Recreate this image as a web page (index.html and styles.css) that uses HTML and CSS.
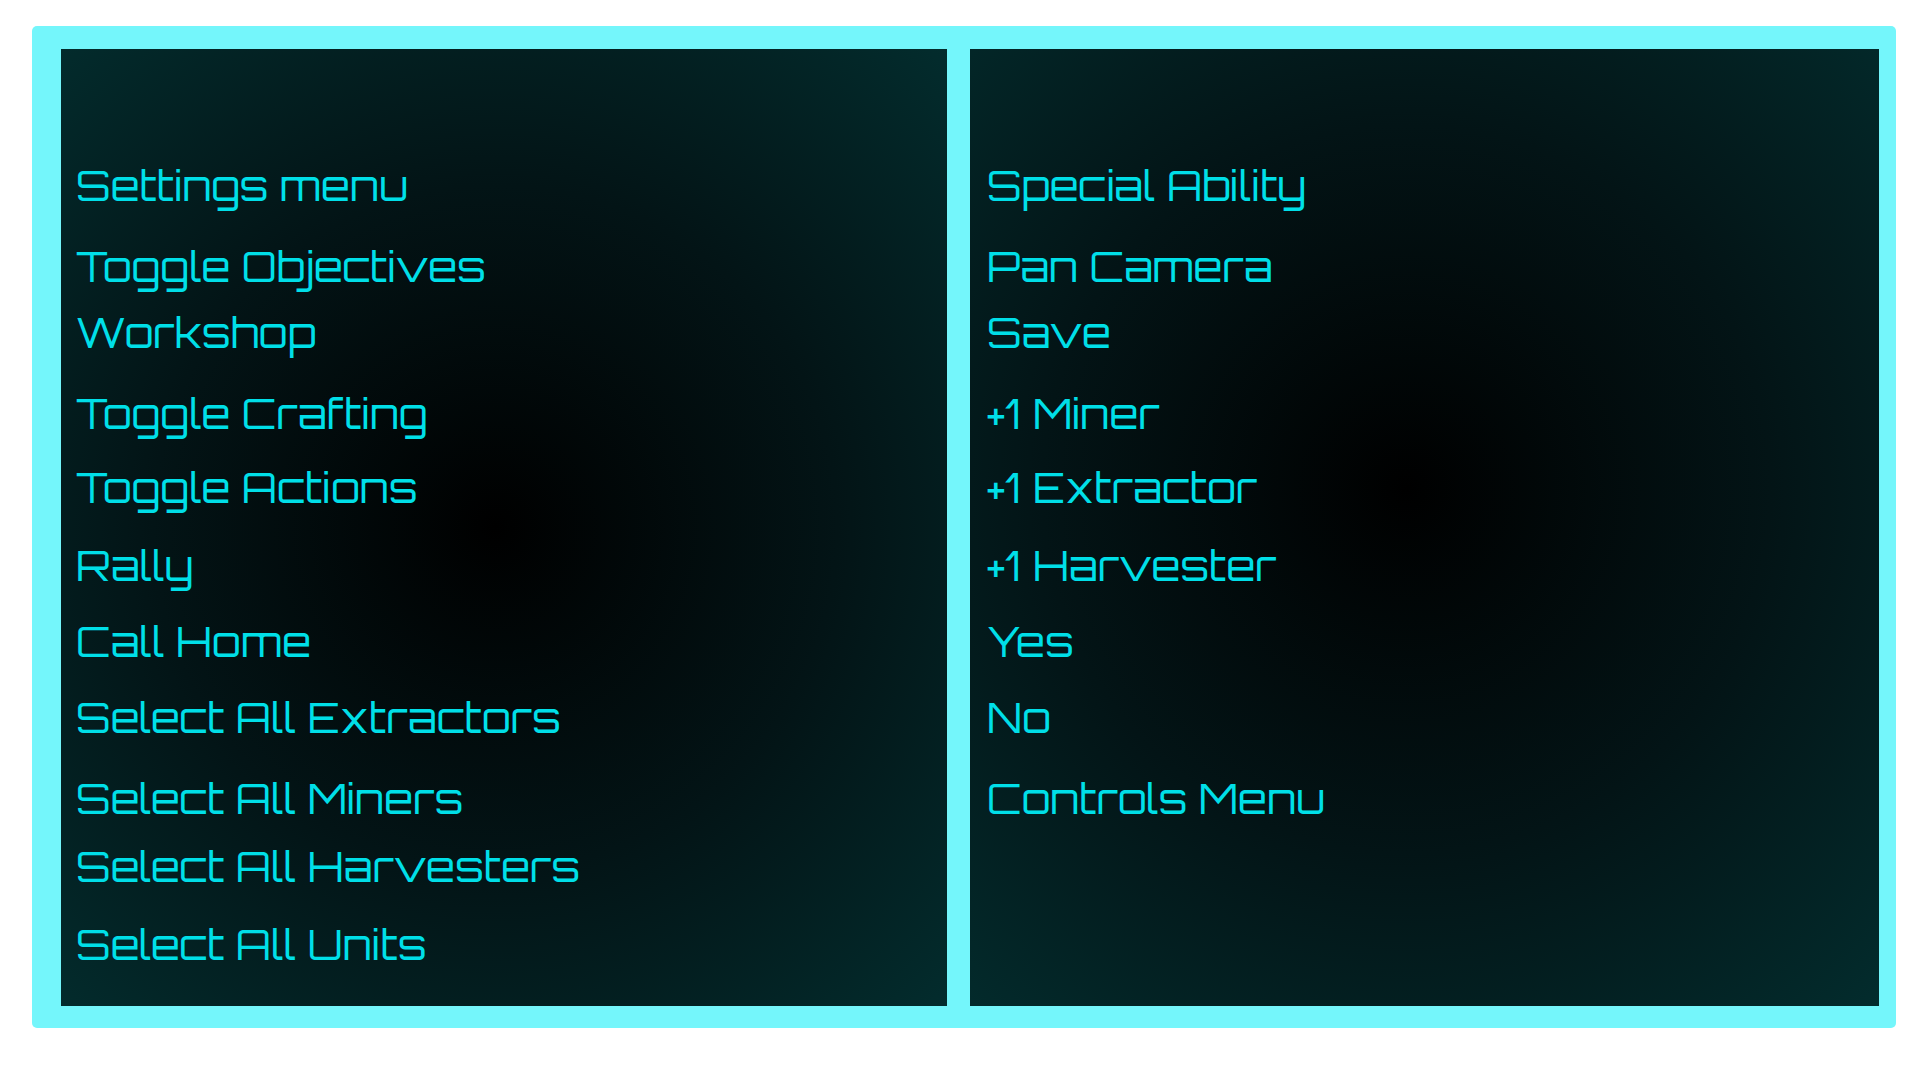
FILE: index.html
```html
<!DOCTYPE html>
<html lang="en">
<head>
<meta charset="utf-8">
<title>Controls</title>
<link rel="stylesheet" href="styles.css">
</head>
<body>
<main class="frame">
  <ul class="panel panel-left">
    <li>Settings menu</li>
    <li>Toggle Objectives</li>
    <li>Workshop</li>
    <li>Toggle Crafting</li>
    <li>Toggle Actions</li>
    <li>Rally</li>
    <li>Call Home</li>
    <li>Select All Extractors</li>
    <li>Select All Miners</li>
    <li>Select All Harvesters</li>
    <li>Select All Units</li>
  </ul>
  <ul class="panel panel-right">
    <li>Special Ability</li>
    <li>Pan Camera</li>
    <li>Save</li>
    <li>+1 Miner</li>
    <li>+1 Extractor</li>
    <li>+1 Harvester</li>
    <li>Yes</li>
    <li>No</li>
    <li>Controls Menu</li>
  </ul>
</main>
</body>
</html>
```

FILE: styles.css
```css
* {
  box-sizing: border-box;
}

body {
  margin: 0;
  padding: 26px 24px 52px 32px;
  background: #fff;
  font-family: Orbitron, "DejaVu Sans", sans-serif;
}

.frame {
  display: grid;
  grid-template-columns: 886fr 909fr;
  gap: 23px;
  padding: 23px 17px 22px 29px;
  border-radius: 5px;
  background: #74f6fb;
}

.panel {
  display: grid;
  grid-template-rows: 81px 81px 66px 81px 74px 78px 76px 76px 81px 68px 78px;
  align-items: end;
  margin: 0;
  padding: 79px 15px 38px;
  list-style: none;
  color: #00dfe8;
  font-size: 42px;
  line-height: 48px;
}

.panel-left {
  background: radial-gradient(circle farthest-corner at 49% 50%, #000 0%, #031416 52%, #032c2d 100%);
}

.panel-right {
  padding-left: 17px;
  background: radial-gradient(circle farthest-corner at 48% 46%, #000 0%, #031416 52%, #032c2d 100%);
}
```
